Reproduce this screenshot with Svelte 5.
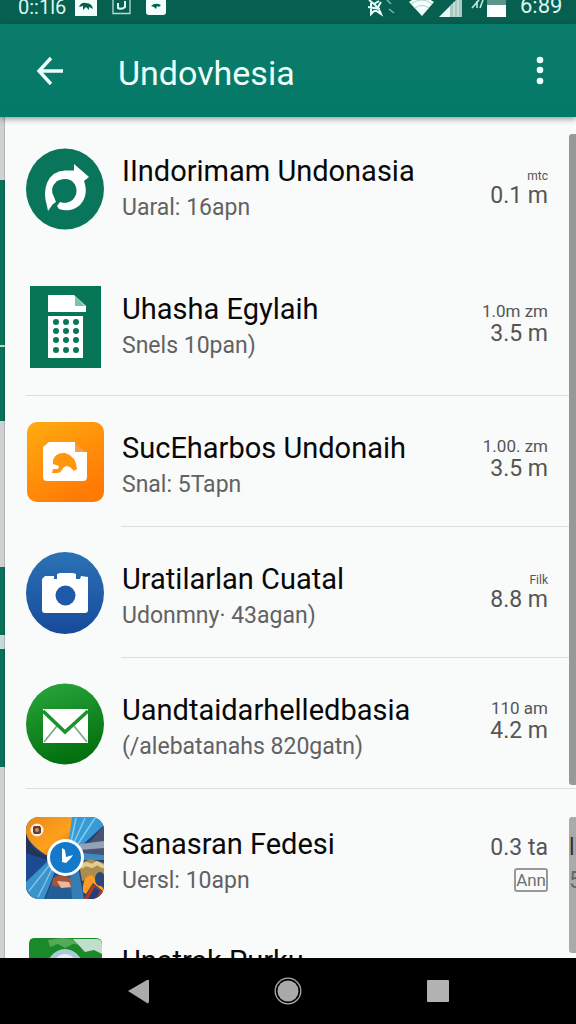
<script lang="ts">
  type App = {
    icon: string;
    name: string;
    detail: string;
    note?: string;
    size: string;
    kind: 'tiny' | 'note' | 'badge' | 'none';
    tall?: boolean;
    divider?: 'full' | 'inset';
    low?: boolean;
  };

  const apps: App[] = [
    { icon: 'sync', name: 'IIndorimam Undonasia', detail: 'Uaral: 16apn', note: 'mtc', size: '0.1 m', kind: 'tiny', tall: true },
    { icon: 'calc', name: 'Uhasha Egylaih', detail: 'Snels 10pan)', note: '1.0m zm', size: '3.5 m', kind: 'note', tall: true, divider: 'full' },
    { icon: 'file', name: 'SucEharbos Undonaih', detail: 'Snal: 5Tapn', note: '1.00. zm', size: '3.5 m', kind: 'note', divider: 'inset', low: true },
    { icon: 'camera', name: 'Uratilarlan Cuatal', detail: 'Udonmny· 43agan)', note: 'Filk', size: '8.8 m', kind: 'tiny', divider: 'inset', low: true },
    { icon: 'mail', name: 'Uandtaidarhelledbasia', detail: '(/alebatanahs 820gatn)', note: '110 am', size: '4.2 m', kind: 'note', divider: 'full', low: true },
    { icon: 'clock', name: 'Sanasran Fedesi', detail: 'Uersl: 10apn', note: 'Ann', size: '0.3 ta', kind: 'badge', tall: true, low: true },
    { icon: 'park', name: 'Unatrak Purku', detail: '', size: '', kind: 'none' },
  ];
</script>

<div class="screen">
  <div class="status">
    <span class="status-time">0::1l6</span>
    <svg class="status-left" viewBox="75 0 92 24" width="92" height="24" aria-hidden="true">
      <path d="M75 0h22v16H75z" fill="#f2fffc"/>
      <path d="M79 7Q81 2 86 3Q92 3 93 9L89 7V10L86 7L83 10V6z" fill="#07604f"/>
      <path d="M113 -1V13.5H130V-1" fill="none" stroke="#b9ddd5" stroke-width="1.3"/>
      <path d="M118 3V8Q122 10 125 7V1" fill="none" stroke="#dcf5ef" stroke-width="2"/>
      <path d="M146 0h20v12q0 3-3 3h-14q-3 0-3-3z" fill="#f2fffc"/>
      <path d="M151 6Q155 2 161 5L159 7L157 6L156 9L154 7z" fill="#07604f"/>
    </svg>
    <svg class="status-right" viewBox="367 0 141 24" width="141" height="24" aria-hidden="true">
      <path d="M369 0L374 4L379 1M368 7L380 9M371 3L371 14L375 10L381 14L378 7L381 2M374 4L378 8" fill="none" stroke="#e9fffa" stroke-width="2"/>
      <path d="M387 0L391 4M389 9L394 13" stroke="#76b5a8" stroke-width="1.6"/>
      <path d="M409 2Q421-7 434 2L422 16z" fill="#f2fffc"/>
      <path d="M411 4Q422-4 432 4M415 8Q422 3 429 8" fill="none" stroke="#b7cfca" stroke-width="1"/>
      <path d="M439 17L452 4V17z" fill="#e9f8f5"/>
      <path d="M450 6L462 -6V17H450z" fill="#a9c8c1"/>
      <path d="M454 2V17M458 0V17" stroke="#dff2ee" stroke-width="1"/>
      <path d="M472 8L479 0M477 1V8M483 0L480 8" stroke="#c6e8e0" stroke-width="1.6"/>
      <path d="M487 0h19v6h-19z" fill="#5c968a"/>
      <path d="M487 5h19v12h-19z" fill="#fff"/>
    </svg>
    <span class="status-clock">6:89</span>
  </div>

  <header class="bar">
    <button class="icon-btn" aria-label="Back">
      <svg viewBox="0 0 28 30" width="28" height="30" aria-hidden="true">
        <path d="M27 15H3M15 2L3 15L15 28" fill="none" stroke="currentColor" stroke-width="3.4"/>
      </svg>
    </button>
    <h1>Undovhesia</h1>
    <button class="icon-btn more" aria-label="More options">
      <svg viewBox="0 0 8 30" width="8" height="30" aria-hidden="true" fill="currentColor">
        <circle cx="4" cy="4" r="3.3"/><circle cx="4" cy="14" r="3.3"/><circle cx="4" cy="25" r="3.3"/>
      </svg>
    </button>
  </header>

  <main>
    <div class="edge" aria-hidden="true"></div>
    <ul>
      {#each apps as app}
        <li class:tall={app.tall} class:low={app.low} class:last={app.kind === 'none'}>
          <svg class="app-icon" viewBox="26 0 78 82" width="78" height="82" aria-hidden="true">
            {#if app.icon === 'sync'}
              <ellipse cx="65" cy="41" rx="39" ry="40.5" fill="#09755a"/>
              <path d="M48 63L47 58Q43 45 47 35Q52 23 65 22.5H74V16L89 29L84 33Q89 47 80 57Q71 65 59 61L57 58L60 54Q68 57 74 49Q79 39 72 33Q66 29 57 33Q49 40 54 49L56 54L53 56z" fill="#fff"/>
              <circle cx="65" cy="43" r="11.5" fill="#09755a"/>
            {:else if app.icon === 'calc'}
              <path d="M30 0h71v82H30z" fill="#077657"/>
              <path d="M48 9H74L86 20V26H48z" fill="#fff"/>
              <path d="M75 10V20H85z" fill="#7dc0ad"/>
              <path d="M48 30H83V72H48z" fill="#fff"/>
              {#each [36, 45, 54, 64] as y}
                {#each [56, 66, 76] as x}
                  <circle cx={x} cy={y} r="3" fill="#0a7558"/>
                {/each}
              {/each}
            {:else if app.icon === 'file'}
              <defs>
                <linearGradient id="orange" x1="0" y1="0" x2="0.6" y2="1">
                  <stop offset="0" stop-color="#ffac10"/><stop offset="1" stop-color="#ff7a05"/>
                </linearGradient>
              </defs>
              <rect x="27" y="1" width="77" height="80" rx="10" fill="url(#orange)"/>
              <path d="M49 21H75V31H87V56Q87 60 83 60H47Q43 60 43 56V26z" fill="#fff"/>
              <path d="M75 22V31H85z" fill="#f7a04a"/>
              <path d="M53 39Q56 31 65 32Q76 35 77 48L74 50L70 46L66 45L63 47Q61 52 57 52L52 52L53 48L58 48L59 45L53 43z" fill="#ff960d"/>
            {:else if app.icon === 'camera'}
              <defs>
                <linearGradient id="blue" x1="0" y1="0" x2="0" y2="1">
                  <stop offset="0" stop-color="#2b72b5"/><stop offset="1" stop-color="#174a9c"/>
                </linearGradient>
              </defs>
              <ellipse cx="65" cy="41" rx="39" ry="41" fill="url(#blue)"/>
              <path d="M45 24H54V27H57V22L60 21H73L76 22V27H80L81 24L88 25V58Q88 61 85 61H45Q42 61 42 58V27z" fill="#fff"/>
              <circle cx="65.5" cy="43.5" r="10" fill="#1e5aa8"/>
            {:else if app.icon === 'mail'}
              <defs>
                <linearGradient id="green" x1="0" y1="0" x2="0.3" y2="1">
                  <stop offset="0" stop-color="#2aa83d"/><stop offset="1" stop-color="#03710f"/>
                </linearGradient>
              </defs>
              <ellipse cx="65" cy="41" rx="39" ry="40.5" fill="url(#green)"/>
              <path d="M43 26H88V60H43z" fill="#fff"/>
              <path d="M44 59L57 43M87 59L74 43" stroke="#79ab7e" stroke-width="1.7"/>
              <path d="M43 28L65 49L88 28" fill="none" stroke="#18942a" stroke-width="3.5"/>
            {:else if app.icon === 'clock'}
              <defs>
                <clipPath id="tile"><rect x="26" y="0" width="78" height="82" rx="13"/></clipPath>
                <linearGradient id="sun" x1="0" y1="0" x2="1" y2="1">
                  <stop offset="0" stop-color="#e68a19"/><stop offset="0.6" stop-color="#ffa01d"/><stop offset="1" stop-color="#b96917"/>
                </linearGradient>
              </defs>
              <g clip-path="url(#tile)">
                <path d="M26 0h78v82H26z" fill="#234477"/>
                <path d="M26 0H73L68 32L46 38Q27 26 26 15z" fill="url(#sun)"/>
                <path d="M26 17Q31 34 48 40L45 47L26 60z" fill="#203659"/>
                <path d="M26 36L48 43L40 55L26 65z" fill="#1d4b91"/>
                <path d="M72 0H104V8L78 32L68 31z" fill="#389bd5"/>
                <path d="M76 1L70 30M85 1L72 30M95 1L76 30" stroke="#82cbee" stroke-width="1.5"/>
                <path d="M104 8V39L80 38z" fill="#485371"/>
                <path d="M80 27L104 24V31L80 33z" fill="#95a1b6"/>
                <path d="M81 36L104 38V43H79z" fill="#3c8cc2"/>
                <path d="M50 42L26 65V82H44L56 52z" fill="#3b93ca"/>
                <path d="M52 45L29 74M54 48L38 80" stroke="#7cc1e6" stroke-width="1.5"/>
                <path d="M55 58L73 56L75 82H45z" fill="#215f96"/>
                <path d="M53 61Q62 56 72 62L71 71L52 69z" fill="#a65436"/>
                <path d="M57 64L69 65L71 70L61 71z" fill="#ecb89d"/>
                <path d="M70 53L78 50L84 82H72z" fill="#357eb4"/>
                <path d="M79 47L90 42L104 46V59L82 64z" fill="#ad8d4e"/>
                <path d="M81 50L86 47L92 49L97 46L104 50" fill="none" stroke="#e2cd8d" stroke-width="4"/>
                <path d="M83 75Q82 59 92 58L103 71L104 75L93 66L86 77z" fill="#ff9b22"/>
                <path d="M84 82L93 67L104 76V82z" fill="#b13b1e"/>
                <path d="M88 82L95 70L100 74L96 82z" fill="#243f80"/>
                <ellipse cx="100" cy="62" rx="5" ry="7" fill="#2a4779"/>
              </g>
              <circle cx="37" cy="13" r="6.5" fill="#f9f1e5"/>
              <path d="M34 9h6l1 2v5l-2 1h-5l-1-2v-5z" fill="#673d32"/>
              <circle cx="37" cy="13" r="2" fill="#c8906c"/>
              <circle cx="65.5" cy="40.5" r="18.5" fill="#fff"/>
              <circle cx="65.5" cy="40.5" r="15.5" fill="#1579c9"/>
              <path d="M62 31L65 33L66 40L73 38L71 41L66 46L62 45z" fill="#fff"/>
            {:else}
              <path d="M34 0H96Q102 0 102 6V82H29V6Q29 0 34 0z" fill="#19892a"/>
              <path d="M48 2L62 0L77 2L82 7L73 6L65 10L58 6L50 9z" fill="#55aa57"/>
              <path d="M73 1H97Q102 1 102 7V16L94 12L85 14z" fill="#bfdecb"/>
              <ellipse cx="65" cy="33" rx="19" ry="22" fill="#a8cbd4"/>
              <ellipse cx="65" cy="34" rx="14" ry="18" fill="#e5eff3"/>
            {/if}
          </svg>
          <div class="row" class:full={app.divider === 'full'} class:inset={app.divider === 'inset'}>
            <div class="text">
              <h2>{app.name}</h2>
              <p>{app.detail}</p>
            </div>
            <div class="meta {app.kind}">
              {#if app.kind === 'badge'}
                <span class="size">{app.size}</span>
                <span class="badge-box">{app.note}</span>
              {:else if app.kind !== 'none'}
                <span class="note">{app.note}</span>
                <span class="size">{app.size}</span>
              {/if}
            </div>
          </div>
        </li>
      {/each}
    </ul>
    <div class="scroll" aria-hidden="true">
      <div class="thumb"></div>
      <div class="thumb second"><span>lk</span><small>5</small></div>
    </div>
  </main>

  <nav>
    <button aria-label="Back">
      <svg viewBox="0 0 28 28" width="28" height="28" aria-hidden="true">
        <path d="M4 14L23 3Q25 2 25 4V24Q25 27 23 26z" fill="#aaa"/>
      </svg>
    </button>
    <button aria-label="Home">
      <svg viewBox="0 0 28 28" width="28" height="28" aria-hidden="true">
        <circle cx="14" cy="14" r="12.8" fill="none" stroke="#aaa" stroke-width="1.3"/>
        <circle cx="14" cy="14" r="10.5" fill="#aaa"/>
      </svg>
    </button>
    <button aria-label="Recent apps">
      <svg viewBox="0 0 28 28" width="28" height="28" aria-hidden="true">
        <rect x="3" y="3" width="22" height="22" rx="1" fill="#b2b2b2"/>
      </svg>
    </button>
  </nav>
</div>

<style>
:global(body) { margin: 0; background: #f9fafa; }

.screen {
  display: flex; flex-direction: column;
  height: 100vh;
  overflow: hidden;
  font-family: Roboto, "Liberation Sans", sans-serif;
  color: #080808;
}

button {
  display: flex; align-items: center; justify-content: center;
  padding: 0; border: 0;
  background: none; color: inherit;
  cursor: pointer;
}

.status {
  display: flex; flex-shrink: 0;
  height: 24px;
  padding: 0 12px 0 18px;
  overflow: hidden;
  background: #07604f;
  color: #dcf5ef;
  font-size: 20px; line-height: 14px;
}
.status-time { width: 57px; }
.status-right { margin-left: auto; }
.status-clock { width: 44px; margin-left: 12px; font-size: 22px; line-height: 12px; }

.bar {
  display: flex; align-items: center; flex-shrink: 0;
  height: 93px;
  padding: 0 16px 0 26px;
  background: linear-gradient(#0a7c6b, #057967);
  box-shadow: 0 2px 6px rgb(0 0 0 / 0.4);
  color: #effffb;
  z-index: 1;
}
.bar h1 {
  flex: 1;
  margin: 0 0 0 44px;
  padding-top: 4px;
  font-size: 34px; font-weight: 400; line-height: 40px;
}
.icon-btn { width: 48px; height: 48px; }
.icon-btn.more { width: 40px; }

main {
  position: relative;
  display: flex; flex: 1;
  min-height: 0;
  overflow: hidden;
  background: #f9fafa;
}
.edge {
  width: 5px; flex-shrink: 0;
  box-shadow: inset -1px 0 1px rgb(0 0 0 / 0.15);
  background: linear-gradient(
    #d0d1d2 0 63px, #0b7059 63px 228px, #b9d8d0 228px 230px, #0b7059 230px 304px,
    #d0d1d2 304px 450px, #0b7059 450px 518px, #c5dcd6 518px 532px, #0b7059 532px 650px,
    #d0d1d2 650px
  );
}

ul {
  flex: 1; min-width: 0;
  margin: 0; padding: 3px 0 0;
  list-style: none;
}
li {
  display: flex; align-items: center;
  height: 131px;
  padding-left: 21px;
}
li.tall { height: 138px; }
li.last { height: 104px; }
.app-icon { flex-shrink: 0; }

.row {
  position: relative;
  display: flex; align-items: center; flex: 1;
  align-self: stretch;
  min-width: 0;
  padding: 0 28px 0 18px;
}
.row.full::after, .row.inset::after {
  content: '';
  position: absolute; right: 0; bottom: 0; left: 17px;
  height: 1px;
  background: #dcdddd;
}
.row.full::after { left: -78px; }

.text { flex: 1; min-width: 0; white-space: nowrap; }
.low .text, .low .badge { padding-top: 8px; }
h2 {
  margin: 0;
  font-size: 29px; font-weight: 400; line-height: 38px;
}
p {
  margin: 0;
  height: 36px;
  color: #626262;
  font-size: 23px; line-height: 36px;
}

.meta {
  display: flex; flex-direction: column; align-items: flex-end;
  color: #555;
  white-space: nowrap;
}
.meta.note { padding-bottom: 6px; }
span.note { font-size: 17px; line-height: 20px; }
.size { font-size: 23px; line-height: 26px; }
.tiny span.note { font-size: 12px; line-height: 14px; }
.badge { gap: 4px; }
.badge .size { line-height: 32px; }
.badge-box {
  border: 2px solid #999;
  border-radius: 3px;
  font-size: 17px; line-height: 20px;
  color: #707070;
}

.scroll {
  position: absolute; top: 17px; right: 0; bottom: 5px;
  display: flex; flex-direction: column; gap: 32px;
  width: 7px;
}
.thumb {
  flex: 651 1 0;
  border-radius: 3px 0 0 3px;
  background: #979898;
}
.thumb.second {
  display: flex; flex: 136 1 0; flex-direction: column;
  min-height: 0;
  overflow: hidden;
  background: #a9aaaa;
  color: #333;
}
.second span { margin-top: 16px; font-size: 23px; line-height: 30px; }
.second small { font-size: 23px; line-height: 36px; color: #666; }

nav {
  display: flex; justify-content: center; flex-shrink: 0;
  height: 66px;
  background: #000;
}
nav button { width: 150px; }
</style>
